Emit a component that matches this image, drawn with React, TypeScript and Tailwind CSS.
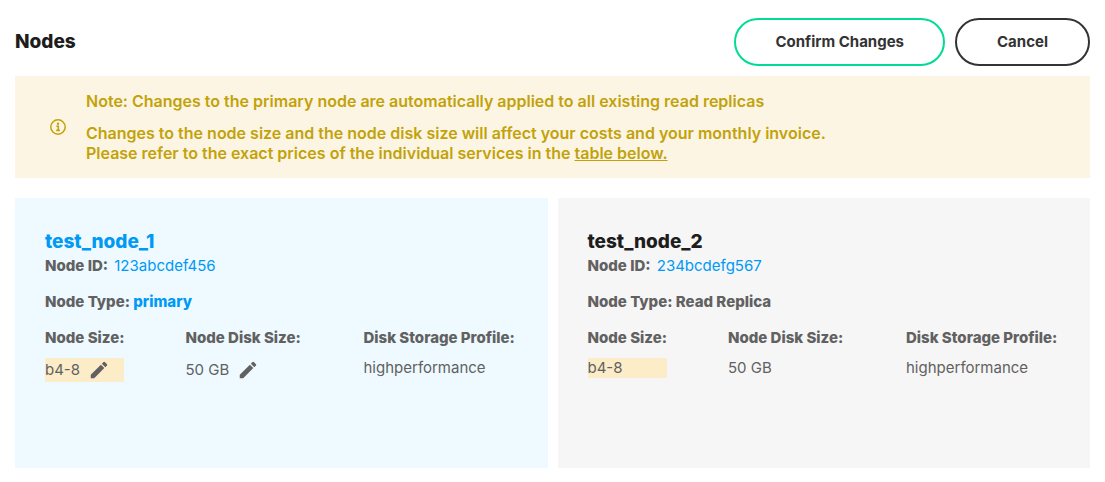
import { MdEdit } from "react-icons/md";

interface DbNode {
  id: string;
  name: string;
  type: string;
  size: string;
  disk: string;
  profile: string;
  primary: boolean;
}

const nodes: DbNode[] = [
  {
    id: "123abcdef456",
    name: "test_node_1",
    type: "primary",
    size: "b4-8",
    disk: "50 GB",
    profile: "highperformance",
    primary: true,
  },
  {
    id: "234bcdefg567",
    name: "test_node_2",
    type: "Read Replica",
    size: "b4-8",
    disk: "50 GB",
    profile: "highperformance",
    primary: false,
  },
];

function InfoIcon() {
  return (
    <svg
      viewBox="0 0 16 16"
      className="size-4 shrink-0"
      fill="none"
      stroke="currentColor"
      strokeWidth="1.5"
      aria-hidden="true"
    >
      <circle cx="8" cy="8" r="7.2" />
      <path d="M6.3 7.3H8.3V11.3M6.2 11.4H9.9" strokeWidth="1.6" />
      <circle cx="8" cy="4.8" r="1.2" fill="currentColor" stroke="none" />
    </svg>
  );
}

function EditButton({ label }: { label: string }) {
  return (
    <button type="button" aria-label={label} className="flex h-6 items-center">
      <MdEdit className="size-[22px]" />
    </button>
  );
}

function NodeCard({ node }: { node: DbNode }) {
  return (
    <section
      className={`min-h-[270px] px-[30px] pt-8 ${node.primary ? "bg-[#eefaff]" : "bg-[#f6f6f6]"}`}
    >
      <h2
        className={`text-[19px] leading-6 font-extrabold ${node.primary ? "text-[#0099f5]" : "text-[#1d1d1d]"}`}
      >
        {node.name}
      </h2>
      <p className="pt-0.5 leading-5">
        <span className="mr-0.5 font-extrabold">Node ID:</span>{" "}
        <a href="#" className="text-[#0099f5]">
          {node.id}
        </a>
      </p>
      <p className="mt-4 leading-5 font-extrabold">
        Node Type:{" "}
        <span className={node.primary ? "text-[#0099f5]" : ""}>{node.type}</span>
      </p>
      <dl className="mt-4 flex justify-between leading-5">
        <div>
          <dt className="font-extrabold">Node Size:</dt>
          <dd className="mt-2.5 flex items-center gap-2 bg-[#fcecc8]">
            {node.size}
            {node.primary && <EditButton label="Edit node size" />}
          </dd>
        </div>
        <div className="min-w-[117px]">
          <dt className="font-extrabold">Node Disk Size:</dt>
          <dd className="mt-2.5 flex items-center gap-2">
            {node.disk}
            {node.primary && <EditButton label="Edit node disk size" />}
          </dd>
        </div>
        <div className="min-w-[154px]">
          <dt className="font-extrabold">Disk Storage Profile:</dt>
          <dd className="mt-2.5">{node.profile}</dd>
        </div>
      </dl>
    </section>
  );
}

export default function App() {
  return (
    <main className="bg-white px-[15px] pt-[18px] pb-3.5 font-['Inter',sans-serif] text-[15px] text-[#616161]">
      <header className="flex items-center justify-between">
        <h1 className="text-[19px] leading-6 font-extrabold text-[#1d1d1d]">Nodes</h1>
        <div className="flex gap-2.5 font-bold text-[#333333]">
          <button type="button" className="h-12 rounded-full border-2 border-[#00dc94] px-[39px]">
            Confirm Changes
          </button>
          <button type="button" className="h-12 rounded-full border-2 border-[#333333] px-10">
            Cancel
          </button>
        </div>
      </header>

      <div
        role="note"
        className="mt-2.5 flex items-center gap-5 bg-[#fdf5e4] py-[15px] pl-[35px] text-base leading-5 font-semibold text-[#c2a20a]"
      >
        <InfoIcon />
        <div>
          <p>Note: Changes to the primary node are automatically applied to all existing read replicas</p>
          <p className="mt-3">
            Changes to the node size and the node disk size will affect your costs and your monthly invoice.
            <br />
            Please refer to the exact prices of the individual services in the{" "}
            <a href="#" className="underline">
              table below.
            </a>
          </p>
        </div>
      </div>

      <div className="mt-5 grid grid-cols-2 gap-2.5">
        {nodes.map((node) => (
          <NodeCard key={node.id} node={node} />
        ))}
      </div>
    </main>
  );
}
